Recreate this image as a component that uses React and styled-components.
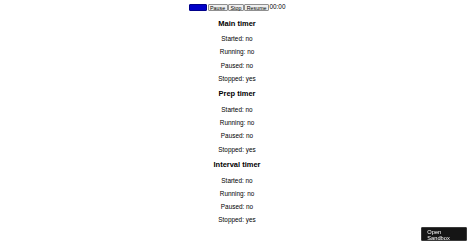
import React, { useState } from 'react'
import styled, { createGlobalStyle } from 'styled-components'

// the page is drawn at 0.4 of its natural size
const GlobalStyle = createGlobalStyle`
	body {
		margin: 3.2px;
		font-family: "Liberation Sans", Arial, sans-serif;
		font-size: 6.4px;
		color: #000;
		background: #fff;
	}
`

const Page = styled.div`
	text-align: center;
`

const Controls = styled.div`
	display: flex;
	justify-content: center;
	align-items: center;
	height: 8px;
	line-height: 7.4px;
`

const Button = styled.button`
	height: 7.2px;
	margin: 0 0 0 0.6px;
	padding: 0 ${p => (p.$blank ? '0' : '1.4px')};
	width: ${p => (p.$blank ? '18px' : 'auto')};
	font-family: "Liberation Sans", Arial, sans-serif;
	font-size: 5.3px;
	line-height: 6px;
	color: #000;
	background: ${p => (p.$blank ? '#0000c8' : '#efefef')};
	border: 0.5px solid ${p => (p.$blank ? '#00008a' : '#8f8f8f')};
	border-radius: 1px;
`

const Clock = styled.span`
	margin-left: 0.6px;
`

const Title = styled.h3`
	font-size: 7.49px;
	margin: 7.45px 0;
`

const Line = styled.p`
	margin: 6.3px 0;
`

const SandboxLink = styled.div`
	position: fixed;
	right: 6.7px;
	bottom: 7.3px;
	width: 46px;
	height: 13.4px;
	box-sizing: border-box;
	padding: 0.5px 5px;
	background: #151515;
	border: 0.5px solid #3a3a3a;
	border-radius: 1px;
	color: #fff;
	font-size: 5.7px;
	line-height: 6px;
	text-align: left;
`

function TimerState({ title, state }) {
	return (
		<section>
			<Title>{title}</Title>
			<Line>Started: {state.started ? 'yes' : 'no'}</Line>
			<Line>Running: {state.running ? 'yes' : 'no'}</Line>
			<Line>Paused: {state.paused ? 'yes' : 'no'}</Line>
			<Line>Stopped: {state.stopped ? 'yes' : 'no'}</Line>
		</section>
	)
}

const idle = { started: false, running: false, paused: false, stopped: true }

export default function App() {
	const [timers] = useState({ main: idle, prep: idle, interval: idle })
	return (
		<Page>
			<GlobalStyle />
			<Controls>
				<Button $blank />
				<Button>Pause</Button>
				<Button>Stop</Button>
				<Button>Resume</Button>
				<Clock>00:00</Clock>
			</Controls>
			<TimerState title="Main timer" state={timers.main} />
			<TimerState title="Prep timer" state={timers.prep} />
			<TimerState title="Interval timer" state={timers.interval} />
			<SandboxLink>Open<br />Sandbox</SandboxLink>
		</Page>
	)
}
